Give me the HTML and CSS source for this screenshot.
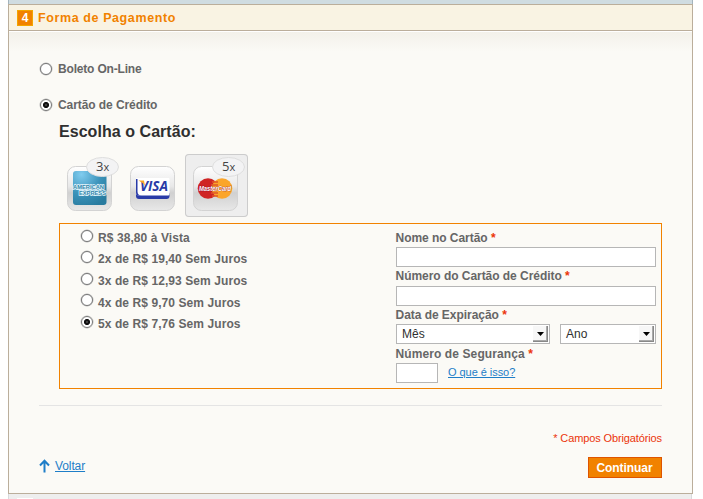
FILE: index.html
```html
<!DOCTYPE html>
<html lang="pt-BR">
<head>
<meta charset="utf-8">
<title>Forma de Pagamento</title>
<link rel="stylesheet" href="styles.css">
</head>
<body>
<div class="previous-step"></div>
<section class="step">
  <header class="step-title"><span class="number">4</span><h2>Forma de Pagamento</h2></header>
  <form class="content">
    <label class="method boleto"><input type="radio" name="method"><span>Boleto On-Line</span></label>
    <label class="method credit"><input type="radio" name="method" checked><span>Cartão de Crédito</span></label>
    <h3>Escolha o Cartão:</h3>
    <div class="cards">
      <div class="card">
        <svg width="63" height="63" viewBox="0 0 63 63">
          <defs>
            <linearGradient id="tile" x2="0" y2="1"><stop offset="0" stop-color="#fff"/><stop offset=".45" stop-color="#e8e8e8"/><stop offset=".6" stop-color="#d0d0d0"/><stop offset="1" stop-color="#e8e8e8"/></linearGradient>
            <radialGradient id="amex" cx=".25" cy=".1" r="1"><stop offset="0" stop-color="#80ccef"/><stop offset=".55" stop-color="#3d94bb"/><stop offset="1" stop-color="#287b9f"/></radialGradient>
          </defs>
          <rect x="8.500" y="12.500" width="44" height="44" rx="8" fill="url(#tile)" stroke="#d3d3d3"/>
          <rect x="14" y="17" width="33.500" height="34" rx="3" fill="url(#amex)"/>
          <g class="amex-text"><text x="14" y="34.500" textLength="31" lengthAdjust="spacingAndGlyphs">AMERICAN</text><text x="20" y="41" textLength="27" lengthAdjust="spacingAndGlyphs">EXPRESS</text></g>
          <ellipse cx="43.500" cy="13" rx="16" ry="9.500" fill="#f3f3f4" stroke="#dedede"/>
          <text class="times" x="37" y="17">3<tspan class="x">x</tspan></text>
        </svg>
      </div>
      <div class="card">
        <svg width="63" height="63" viewBox="0 0 63 63">
          <rect x="8.500" y="12.500" width="44" height="44" rx="8" fill="url(#tile)" stroke="#d3d3d3"/>
          <path d="M14 39h33.500v3q0 3-3 3H17q-3 0-3-3z" fill="#293ba7"/>
          <path d="M14 25q0-1 1-1h31.500q1 0 1 1v15q0 1.500-1.500 1.500H17q-3 0-3-3z" fill="#fff"/>
          <path d="M14 25h1.500v12.500q0 4 4 4H17q-3 0-3-3z" fill="#293ba7"/>
          <text class="visa" x="18" y="37" textLength="28" lengthAdjust="spacingAndGlyphs">VISA</text>
          <path d="M16.500 26.500h5.500l1 5.500q-2-3.500-6.500-5.500z" fill="#f7a927"/>
        </svg>
      </div>
      <div class="card selected">
        <svg width="63" height="63" viewBox="0 0 63 63">
          <rect x="8.500" y="12.500" width="44" height="44" rx="8" fill="url(#tile)" stroke="#d3d3d3"/>
          <circle cx="23" cy="34.500" r="10.300" fill="#cf2424"/>
          <circle cx="37" cy="34.500" r="10.300" fill="#fba52b"/>
          <path d="M27 28h6M26 31h7M26 39h7M27 42h6" stroke="#df5527" stroke-width="1.500"/>
          <text class="master" x="14" y="37" textLength="32" lengthAdjust="spacingAndGlyphs">MasterCard</text>
          <ellipse cx="43.500" cy="13" rx="16" ry="9.500" fill="#f3f3f4" stroke="#dedede"/>
          <text class="times" x="37" y="17">5<tspan class="x">x</tspan></text>
        </svg>
      </div>
    </div>
    <div class="details">
      <div class="installments">
        <label><input type="radio" name="parcel"><span>R$ 38,80 à Vista</span></label>
        <label><input type="radio" name="parcel"><span>2x de R$ 19,40 Sem Juros</span></label>
        <label><input type="radio" name="parcel"><span>3x de R$ 12,93 Sem Juros</span></label>
        <label class="lowered"><input type="radio" name="parcel"><span>4x de R$ 9,70 Sem Juros</span></label>
        <label><input type="radio" name="parcel" checked><span>5x de R$ 7,76 Sem Juros</span></label>
      </div>
      <div class="fields">
        <label class="caption first"><span>Nome no Cartão <em>*</em></span></label>
        <input class="box" type="text">
        <label class="caption"><span>Número do Cartão de Crédito <em>*</em></span></label>
        <input class="box" type="text">
        <label class="caption short"><span>Data de Expiração <em>*</em></span></label>
        <div class="row">
          <div class="select month"><span>Mês</span><i><svg width="7" height="4"><path d="M0 0h7L3.500 4z"/></svg></i></div>
          <div class="select year"><span>Ano</span><i><svg width="7" height="4"><path d="M0 0h7L3.500 4z"/></svg></i></div>
        </div>
        <label class="caption wide"><span>Número de Segurança <em>*</em></span></label>
        <div class="row"><input class="box cvv" type="text"><a class="help" href="#">O que é isso?</a></div>
      </div>
    </div>
    <footer>
      <p class="required">* Campos Obrigatórios</p>
      <div class="actions">
        <a class="back" href="#"><svg width="11" height="14" viewBox="0 0 11 14"><path d="M5.500 13.500V2M1 6.500l4.500-4.700L10 6.500" fill="none" stroke="#1e7ec8" stroke-width="2"/></svg><span>Voltar</span></a>
        <button type="button">Continuar</button>
      </div>
    </footer>
  </form>
</section>
<div class="next-step"><span></span></div>
</body>
</html>
```
FILE: styles.css
```css
* { box-sizing: border-box; }
body { margin: 0; height: 499px; overflow: hidden; background: #fff; font: 12px/16px "Liberation Sans", Arial, sans-serif; color: #2f2f2f; }
.previous-step { width: 685px; height: 4px; margin-left: 8px; background: #d0dce1; border-right: 1px solid #a3b4bd; border-left: 1px solid #a3b4bd; }
.step { width: 685px; height: 490px; margin-left: 8px; border: 1px solid #bbae9b; background: #fbfaf6; }
.step-title { height: 26px; display: flex; align-items: center; gap: 5px; padding-left: 8px; background: #f9f3e3; border-bottom: 1px solid #bbae9b; }
.number { width: 16px; height: 16px; border: 1px solid #f3a500; background: #f18200; color: #fff; text-align: center; font-weight: bold; font-size: 12px; line-height: 15px; }
h2 { margin: 1px 0 0; font-size: 12.500px; line-height: 16px; letter-spacing: .6px; color: #f18200; }
.content { height: 462px; padding: 29px 30px 0; border-top: 1px solid #fff; background: linear-gradient(#f3f1ea, #fbfaf6 20px); }
input[type=radio] { appearance: none; flex: none; width: 12px; height: 12px; margin: 0; border: 1px solid #777; border-radius: 50%; background: #fff; box-shadow: 0 0 0 .5px #bbb; }
input[type=radio]:checked { background: radial-gradient(circle at 5px 5px, #666 0, #111 1.500px, #111 2.700px, #fff 3.400px); background-origin: padding-box; }
.method { display: flex; align-items: center; gap: 6px; height: 16px; padding-left: 1px; font-weight: bold; color: #666; }
.boleto { letter-spacing: -.18px; }
.credit { margin-top: 20px; letter-spacing: -.08px; }
.boleto input { position: relative; top: -.5px; }
h3 { margin: 9px 0 0 20px; font-size: 16px; line-height: 20px; height: 20px; letter-spacing: .05px; }
.cards { display: flex; margin: 12px 0 0 20px; }
.card { width: 63px; height: 63px; border-radius: 4px; }
.card svg { display: block; }
.card.selected { background: #eee; box-shadow: inset 0 0 0 1px #ccc; }
.times { font: 13px "Open Sans", sans-serif; fill: #444; }
.times .x { font-size: 11px; }
.amex-text { font: bold 6px "Liberation Sans", sans-serif; fill: #3186aa; stroke: #e5f5fb; stroke-width: 1.500px; paint-order: stroke; }
.visa { font: italic bold 14px "Open Sans", sans-serif; fill: #293ba7; }
.master { font: italic bold 7px "Liberation Sans", sans-serif; fill: #fff; stroke: #803; stroke-width: .5px; paint-order: stroke; }
.details { display: flex; width: 603px; height: 166px; margin: 6px 0 0 20px; border: 1px solid #f18200; }
.installments { width: 336px; padding: 3px 0 0 21px; font-weight: bold; color: #666; letter-spacing: .08px; }
.installments label { display: flex; gap: 5px; height: 21.400px; padding-top: 3px; }
.installments .lowered span { padding-top: 1px; }
.fields { width: 260px; padding-top: 4px; }
.caption { display: block; height: 19px; margin-left: -.5px; line-height: 18px; font-weight: bold; color: #666; white-space: nowrap; letter-spacing: -.04px; }
.caption.first { line-height: 20px; }
.caption.short { height: 18px; }
.caption.wide { line-height: 20px; letter-spacing: .1px; }
.caption em { font-style: normal; color: #eb340a; }
.box { display: block; width: 260px; height: 20px; margin: 0; padding: 2px; border: 1px solid #b6b6b6; background: #fff; }
.row { display: flex; gap: 10px; height: 20px; }
.select { display: flex; justify-content: space-between; height: 20px; padding: 1px 1px 1px 5px; border: 1px solid #b6b6b6; background: #fff; line-height: 17px; }
.month { width: 154px; }
.year { width: 96px; }
.select i { display: flex; width: 15px; height: 16px; align-items: center; justify-content: center; background: #f7f7f7; border-right: 1px solid #888; border-bottom: 1px solid #888; box-shadow: inset -1px -1px #aaa; }
.cvv { width: 42px; }
a { color: #1e7ec8; }
.help { font-size: 11px; line-height: 18px; letter-spacing: -.05px; }
footer { width: 623px; margin-top: 16px; border-top: 1px solid #e4e4e4; }
.required { margin: 24px 0 0; text-align: right; font-size: 11px; line-height: 16px; letter-spacing: -.12px; color: #eb340a; }
.actions { display: flex; justify-content: space-between; margin-top: 11px; }
.back { display: flex; align-items: center; gap: 5px; height: 18px; text-decoration: none; }
.back span { text-decoration: underline; letter-spacing: -.1px; }
button { width: 74px; height: 21px; padding: 1px 1px 0 0; border: 1px solid #de5400; background: #f18200; color: #fff; font: bold 12px/18px "Liberation Sans", sans-serif; letter-spacing: -.05px; }
.next-step { width: 684px; height: 5px; margin-left: 8px; padding: 4px 0 0 8px; border-left: 1px solid #d8dadd; border-right: 1px solid #d8dadd; background: #eee; }
.next-step span { display: block; width: 16px; height: 1px; background: #fff; }
```
